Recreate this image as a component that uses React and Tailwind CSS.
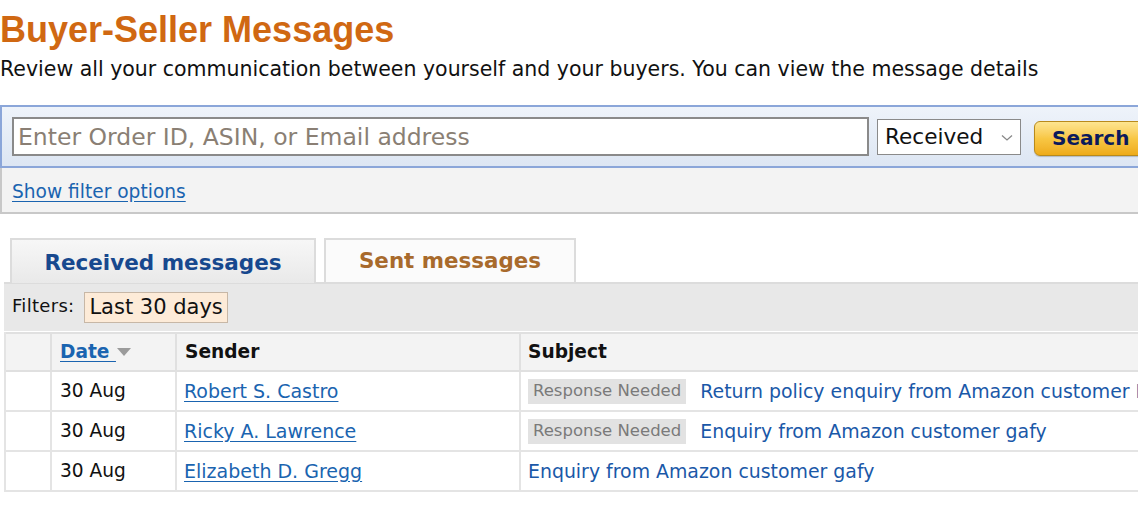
import React from "react";

const rows = [
  { date: "30 Aug", sender: "Robert S. Castro", badge: true, subject: "Return policy enquiry from Amazon customer Mary" },
  { date: "30 Aug", sender: "Ricky A. Lawrence", badge: true, subject: "Enquiry from Amazon customer gafy" },
  { date: "30 Aug", sender: "Elizabeth D. Gregg", badge: false, subject: "Enquiry from Amazon customer gafy" },
];

export default function App() {
  return (
    <div className="w-[1138px] h-[506px] overflow-hidden bg-white font-['DejaVu_Sans',Verdana,sans-serif]">
      <div className="w-[1200px]">
        {/* Header */}
        <h1 className="pt-[10px] text-[36px] leading-[40px] font-bold text-[#d06812] font-['Liberation_Sans',Arial,sans-serif]">
          Buyer-Seller Messages
        </h1>
        <p className="mt-[6px] text-[20.5px] leading-[26px] text-[#111]">
          Review all your communication between yourself and your buyers. You can view the message details
        </p>

        {/* Search panel */}
        <div className="mt-[23px] border-2 border-r-0 border-[#8ba6d9] bg-gradient-to-b from-[#eef3fa] to-[#dde6f3] px-[10px] py-[10px] flex items-center">
          <div className="w-[857px] h-[39px] border-2 border-[#8a8a8a] bg-white flex items-center px-[4px] pt-[3px] text-[23.5px] text-[#8a7f74] whitespace-nowrap overflow-hidden">
            Enter Order ID, ASIN, or Email address
          </div>
          <div className="ml-[8px] w-[144px] h-[36px] border border-[#8a8a8a] bg-white flex items-center justify-between px-[7px] pt-[2px] text-[21.6px] text-[#111]">
            <span>Received</span>
            <svg width="12" height="8" viewBox="0 0 12 8">
              <path d="M1 1.5 L6 6 L11 1.5" fill="none" stroke="#888" strokeWidth="1.3" />
            </svg>
          </div>
          <button className="ml-[13px] mt-[3px] h-[35px] px-[17px] rounded-[6px] border border-[#b88a1c] bg-gradient-to-b from-[#fde58f] via-[#f8c744] to-[#eeab18] text-[20px] font-bold text-[#0b1a5c] shadow-[0_1px_1px_rgba(0,0,0,0.2)]">
            Search
          </button>
        </div>
        <div className="h-[46px] border-l-2 border-b-2 border-[#c8c8c8] bg-[#f3f3f3] flex items-center px-[10px] pt-[3px]">
          <a href="#" className="text-[18.6px] text-[#1a64b0] underline underline-offset-[3px]">
            Show filter options
          </a>
        </div>

        {/* Tabs */}
        <div className="mt-[24px] flex items-end pl-[10px] gap-[8px]">
          <div className="w-[306px] h-[45px] border-2 border-b-0 border-[#dcdcdc] bg-gradient-to-b from-[#f7f7f7] to-[#e9e9e9] flex items-center justify-center pt-[3px] text-[21.5px] font-bold text-[#17488e] -mb-px relative z-10">
            Received messages
          </div>
          <div className="w-[252px] h-[44px] border-2 border-b-0 border-[#dcdcdc] bg-[#fbfbfb] flex items-center justify-center text-[21.4px] font-bold text-[#a86a2c]">
            Sent messages
          </div>
        </div>
        <div className="ml-[4px] h-[49px] border-t-2 border-[#dcdcdc] bg-[#e8e8e8] flex items-center px-[8px]">
          <span className="text-[18px] tracking-[0.3px] text-[#111] -mt-[4px]">Filters:</span>
          <span className="ml-[10px] h-[31px] px-[4px] border border-[#c7b7a6] bg-[#fdebd8] flex items-center text-[21px] text-[#111]">
            Last 30 days
          </span>
        </div>

        {/* Table */}
        <div className="mt-px ml-[4px] border-l-2 border-[#e4e4e4]">
          <div className="h-[40px] flex items-center bg-[#f3f3f3] border-t-2 border-b-2 border-[#e0e0e0]">
            <div className="w-[46px] h-full border-r-2 border-[#e0e0e0]" />
            <div className="w-[125px] h-full border-r-2 border-[#e0e0e0] flex items-center px-[8px]">
              <a href="#" className="text-[18.6px] font-bold text-[#1a64b0] underline underline-offset-[3px] whitespace-pre">
                {"Date "}
              </a>
              <svg width="16" height="10" viewBox="0 0 16 10">
                <path d="M1 1 L15 1 L8 9 Z" fill="#9b9b9b" />
              </svg>
            </div>
            <div className="w-[344px] h-full border-r-2 border-[#e0e0e0] flex items-center px-[8px] text-[18.6px] font-bold text-[#111]">
              Sender
            </div>
            <div className="flex-1 h-full flex items-center px-[7px] text-[18.6px] font-bold text-[#111]">
              Subject
            </div>
          </div>
          {rows.map((r, i) => (
            <div key={i} className="h-[40px] flex items-center border-b-2 border-[#e4e4e4]">
              <div className="w-[46px] h-full border-r-2 border-[#e4e4e4]" />
              <div className="w-[125px] h-full border-r-2 border-[#e4e4e4] flex items-center px-[8px] text-[18.6px] text-[#111]">
                {r.date}
              </div>
              <div className="w-[344px] h-full border-r-2 border-[#e4e4e4] flex items-center px-[7px]">
                <a href="#" className="text-[19px] text-[#1a64b0] underline underline-offset-[3px]">
                  {r.sender}
                </a>
              </div>
              <div className="flex-1 h-full flex items-center px-[7px] whitespace-nowrap">
                {r.badge && (
                  <span className="mr-[14px] h-[25px] px-[5px] bg-[#e2e2e2] flex items-center text-[16.5px] text-[#7a7a7a]">
                    Response Needed
                  </span>
                )}
                <a href="#" className="text-[18.9px] text-[#1a58a8]">
                  {r.subject}
                </a>
              </div>
            </div>
          ))}
        </div>
      </div>
    </div>
  );
}
